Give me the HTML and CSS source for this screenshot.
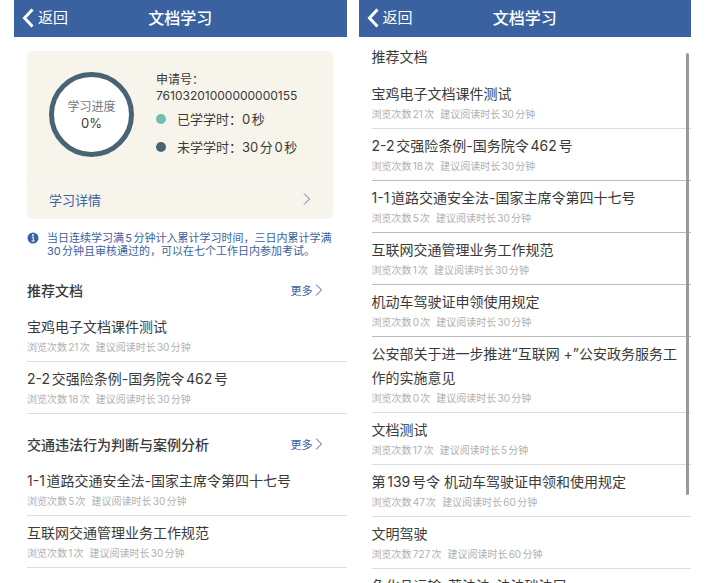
FILE: index.html
```html
<!DOCTYPE html>
<html lang="zh-CN">
<head>
    <meta charset="UTF-8">
    <meta name="viewport" content="width=device-width, initial-scale=1.0">
    <title>文档学习</title>
    <link rel="stylesheet" href="styles.css">
</head>
<body>
    <div class="screens">
        <!-- 学习首页 -->
        <div class="screen">
            <header class="navbar">
                <a class="back" href="#">
                    <svg class="back-icon" viewBox="0 0 12 20"><path d="M10.5 1.5 L2.5 10 L10.5 18.5"/></svg>
                    返回
                </a>
                <h1>文档学习</h1>
            </header>

            <main class="home">
                <section class="card">
                    <div class="summary">
                        <div class="ring">
                            <span class="ring-label">学习进度</span>
                            <span class="ring-value">0%</span>
                        </div>
                        <div class="info">
                            <div class="apply">申请号：<br>76103201000000000155</div>
                            <div class="legend"><span class="dot done"></span>已学学时：0秒</div>
                            <div class="legend"><span class="dot todo"></span>未学学时：30分0秒</div>
                        </div>
                    </div>
                    <a class="detail" href="#">
                        学习详情
                        <svg class="arrow" viewBox="0 0 8 14"><path d="M1 1.5 L6.5 7 L1 12.5"/></svg>
                    </a>
                </section>

                <div class="notice">
                    <svg class="info-icon" viewBox="0 0 12 12">
                        <circle cx="6" cy="6" r="5.5" fill="#3a62a0"/>
                        <path d="M4.8 5 H6.3 V9 M4.6 9 H7.6" fill="none" stroke="#fff"/>
                        <circle cx="6" cy="3" r="0.9" fill="#fff"/>
                    </svg>
                    <p>当日连续学习满5分钟计入累计学习时间，三日内累计学满30分钟且审核通过的，可以在七个工作日内参加考试。</p>
                </div>

                <section class="group">
                    <div class="group-head">
                        <h2>推荐文档</h2>
                        <a class="more" href="#">更多<svg class="arrow small" viewBox="0 0 8 14"><path d="M1 1.5 L6.5 7 L1 12.5"/></svg></a>
                    </div>
                    <ul class="docs">
                        <li><h3>宝鸡电子文档课件测试</h3><p><span>浏览次数21次</span><span>建议阅读时长30分钟</span></p></li>
                        <li><h3>2-2交强险条例-国务院令462号</h3><p><span>浏览次数18次</span><span>建议阅读时长30分钟</span></p></li>
                    </ul>
                </section>

                <section class="group">
                    <div class="group-head">
                        <h2>交通违法行为判断与案例分析</h2>
                        <a class="more" href="#">更多<svg class="arrow small" viewBox="0 0 8 14"><path d="M1 1.5 L6.5 7 L1 12.5"/></svg></a>
                    </div>
                    <ul class="docs">
                        <li><h3>1-1道路交通安全法-国家主席令第四十七号</h3><p><span>浏览次数5次</span><span>建议阅读时长30分钟</span></p></li>
                        <li><h3>互联网交通管理业务工作规范</h3><p><span>浏览次数1次</span><span>建议阅读时长30分钟</span></p></li>
                    </ul>
                </section>
            </main>
        </div>

        <!-- 推荐文档列表 -->
        <div class="screen">
            <header class="navbar">
                <a class="back" href="#">
                    <svg class="back-icon" viewBox="0 0 12 20"><path d="M10.5 1.5 L2.5 10 L10.5 18.5"/></svg>
                    返回
                </a>
                <h1>文档学习</h1>
            </header>

            <main class="list">
                <h2>推荐文档</h2>
                <ul class="docs dark">
                    <li class="light"><h3>宝鸡电子文档课件测试</h3><p><span>浏览次数21次</span><span>建议阅读时长30分钟</span></p></li>
                    <li><h3>2-2交强险条例-国务院令462号</h3><p><span>浏览次数18次</span><span>建议阅读时长30分钟</span></p></li>
                    <li><h3>1-1道路交通安全法-国家主席令第四十七号</h3><p><span>浏览次数5次</span><span>建议阅读时长30分钟</span></p></li>
                    <li><h3>互联网交通管理业务工作规范</h3><p><span>浏览次数1次</span><span>建议阅读时长30分钟</span></p></li>
                    <li><h3>机动车驾驶证申领使用规定</h3><p><span>浏览次数0次</span><span>建议阅读时长30分钟</span></p></li>
                    <li class="light"><h3>公安部关于进一步推进“互联网 +”公安政务服务工作的实施意见</h3><p><span>浏览次数0次</span><span>建议阅读时长30分钟</span></p></li>
                    <li class="light"><h3>文档测试</h3><p><span>浏览次数17次</span><span>建议阅读时长5分钟</span></p></li>
                    <li class="light"><h3>第139号令 机动车驾驶证申领和使用规定</h3><p><span>浏览次数47次</span><span>建议阅读时长60分钟</span></p></li>
                    <li class="light"><h3>文明驾驶</h3><p><span>浏览次数727次</span><span>建议阅读时长60分钟</span></p></li>
                    <li class="light"><h3>危化品运输-著法法-法法础法层</h3></li>
                </ul>
                <div class="scrollbar"></div>
            </main>
        </div>
    </div>
</body>
</html>
```
FILE: styles.css
```css
* {
    box-sizing: border-box;
}

body {
    margin: 0;
    background-color: #fff;
    color: #3a3a3a;
    font-family: Inter, "Noto Sans CJK SC", sans-serif;
    text-autospace: normal;
}

h1, h2, h3, p, ul {
    margin: 0;
    padding: 0;
    font-weight: normal;
}

a {
    text-decoration: none;
    color: #3a62a0;
}

.screens {
    display: grid;
    grid-template-columns: 1fr 1fr;
    gap: 12px;
    height: 100vh;
    padding: 0 16px 0 14px;
    overflow: hidden;
}

.navbar {
    display: grid;
    grid-template-columns: 1fr auto 1fr;
    align-items: center;
    height: 37px;
    padding: 0 8px 2px;
    background-color: #3a62a0;
}

.navbar h1 {
    color: #fff;
    font-size: 16px;
    font-weight: 500;
    line-height: 24px;
}

.back {
    display: flex;
    align-items: center;
    gap: 4px;
    color: #fff;
    font-size: 15px;
    line-height: 24px;
}

.back-icon {
    width: 12px;
    height: 20px;
    fill: none;
    stroke: #fff;
    stroke-width: 3;
}

.arrow {
    width: 8px;
    height: 14px;
    fill: none;
    stroke: #5b7a99;
    stroke-width: 1;
}

.arrow.small {
    stroke: #3a62a0;
}

/* 学习进度 */
.home {
    padding: 14px 0 0 13px;
}

.card {
    margin-right: 14px;
    border-radius: 6px;
    background-color: #f7f4ec;
}

.summary {
    display: flex;
    gap: 22px;
    padding: 21px 12px 17px 22px;
    border-bottom: 1px solid #f3f0ea;
}

.ring {
    display: flex;
    flex-direction: column;
    align-items: center;
    justify-content: center;
    flex: none;
    width: 85px;
    height: 85px;
    border: 5px solid #486473;
    border-radius: 50%;
    background-color: #fff;
    line-height: 16px;
}

.ring-label {
    color: #777;
    font-size: 12px;
}

.ring-value {
    font-size: 13px;
}

.info {
    font-size: 13px;
}

.apply {
    margin-bottom: 1px;
    font-size: 12px;
    line-height: 16px;
}

.legend {
    display: flex;
    align-items: center;
    gap: 11px;
    line-height: 28px;
}

.dot {
    width: 10px;
    height: 10px;
    border-radius: 50%;
}

.done {
    background-color: #6cbfb2;
}

.todo {
    background-color: #486473;
}

.detail {
    display: flex;
    align-items: center;
    justify-content: space-between;
    height: 40px;
    padding: 0 22px;
    font-size: 13px;
}

.notice {
    display: flex;
    gap: 8px;
    padding: 13px 14px 2px 0;
    color: #3a62a0;
    font-size: 11px;
    line-height: 13px;
}

.notice p {
    flex: 1;
}

.info-icon {
    width: 12px;
    height: 12px;
}

/* 文档列表 */
.group-head {
    display: flex;
    align-items: center;
    justify-content: space-between;
    height: 50px;
    padding: 10px 24px 0 0;
}

.group-head h2 {
    font-size: 14px;
    font-weight: 500;
}

.more {
    display: flex;
    align-items: center;
    gap: 2px;
    font-size: 11px;
}

.docs {
    list-style: none;
}

.docs li {
    padding: 5px 8px 6px 0;
    border-bottom: 1px solid #ddd;
}

.docs h3 {
    font-size: 14px;
    line-height: 24px;
}

.docs p {
    display: flex;
    gap: 6px;
    color: #b0b0b0;
    font-size: 10px;
    line-height: 16px;
}

.dark li {
    border-color: #bbb;
}

.dark .light {
    border-color: #ddd;
}

.list {
    position: relative;
    padding-left: 13px;
}

.list h2 {
    font-size: 14px;
    line-height: 40px;
}

.scrollbar {
    position: absolute;
    top: 16px;
    right: 2px;
    width: 3px;
    height: 442px;
    border-radius: 2px;
    background-color: #999;
}
```
